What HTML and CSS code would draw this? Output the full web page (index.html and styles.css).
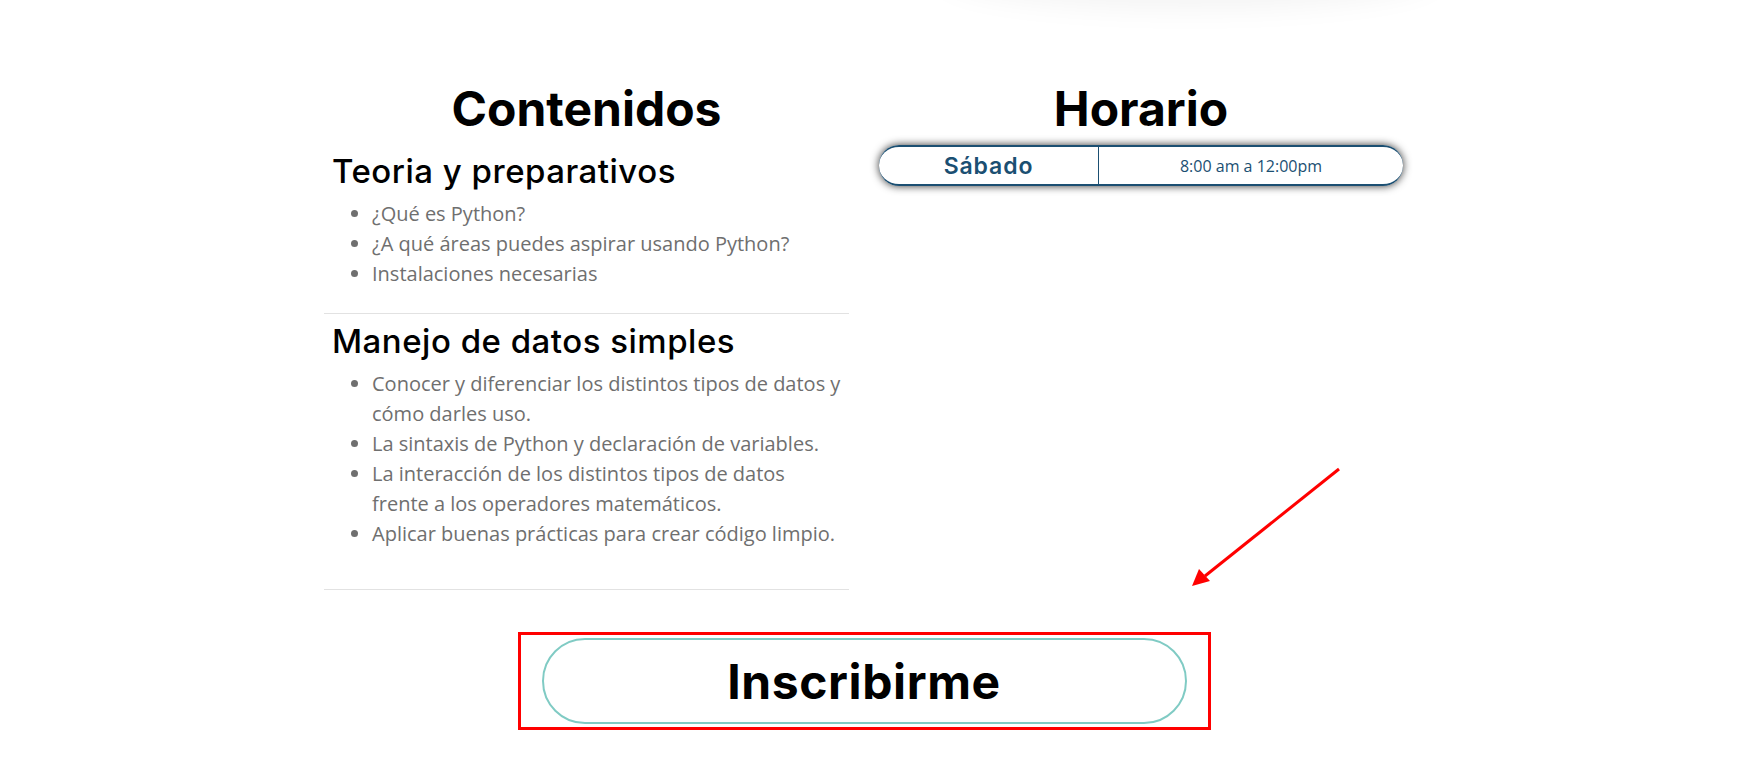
FILE: index.html
```html
<!DOCTYPE html>
<html lang="es">
<head>
<meta charset="utf-8">
<title>Curso de Python</title>
<link rel="stylesheet" href="styles.css">
</head>
<body>
<div class="page">
  <div class="top-shade"></div>
  <main class="wrap">
    <div class="cols">
      <section class="col col-left">
        <h2 class="title">Contenidos</h2>
        <div class="block">
          <h3 class="block-title">Teoria y preparativos</h3>
          <ul class="items">
            <li>¿Qué es Python?</li>
            <li>¿A qué áreas puedes aspirar usando Python?</li>
            <li>Instalaciones necesarias</li>
          </ul>
        </div>
        <div class="block block-last">
          <h3 class="block-title">Manejo de datos simples</h3>
          <ul class="items">
            <li>Conocer y diferenciar los distintos tipos de datos y cómo darles uso.</li>
            <li>La sintaxis de Python y declaración de variables.</li>
            <li>La interacción de los distintos tipos de datos frente a los operadores matemáticos.</li>
            <li>Aplicar buenas prácticas para crear código limpio.</li>
          </ul>
        </div>
      </section>
      <section class="col col-right">
        <h2 class="title">Horario</h2>
        <table class="schedule">
          <tr>
            <td class="day">Sábado</td>
            <td class="time">8:00 am a 12:00pm</td>
          </tr>
        </table>
      </section>
    </div>
    <div class="cta">
      <div class="mark">
        <a class="btn" href="#">Inscribirme</a>
      </div>
    </div>
  </main>
  <svg class="arrow" width="160" height="130" viewBox="0 0 160 130">
    <line x1="148" y1="2" x2="14" y2="109" stroke="#ff0000" stroke-width="3"/>
    <polygon points="1,119 8,102 19,114" fill="#ff0000"/>
  </svg>
</div>
</body>
</html>
```
FILE: styles.css
```css
* { box-sizing: border-box; }
html, body { margin: 0; padding: 0; background: #ffffff; }
body { font-family: "Open Sans", "Liberation Sans", sans-serif; color: #000; }

.page { position: relative; width: 100%; height: 758px; overflow: hidden; }

.top-shade {
  position: absolute;
  left: 940px;
  top: -70px;
  width: 500px;
  height: 70px;
  border-radius: 50%;
  box-shadow: 0 8px 30px rgba(0, 0, 0, 0.05);
}

.wrap {
  width: 1104px;
  margin: 0 auto;
  padding: 0 24px 0 0;
}

.cols {
  display: flex;
  gap: 30px;
  align-items: flex-start;
}

.col-left { width: 525px; }
.col-right { width: 524px; }

.title {
  font-family: Inter, "DejaVu Sans", sans-serif;
  font-weight: 700;
  font-size: 48px;
  line-height: 58px;
  text-align: center;
  margin: 80px 0 9px 0;
}

.block {
  border-bottom: 1px solid #e2e2e2;
  padding: 4px 8px 0 8px;
}

.block-last { padding-top: 7px; }

.block-title {
  font-family: Inter, "DejaVu Sans", sans-serif;
  font-weight: 500;
  font-size: 33px;
  line-height: 40px;
  letter-spacing: 0.5px;
  margin: 0;
}

.items {
  list-style: disc;
  margin: 0;
  padding: 8px 0 24px 40px;
  font-size: 20px;
  line-height: 30px;
  color: #6f6f6f;
}

.items li::marker { color: #6f6f6f; }

.block-last .items { padding-bottom: 40px; }

.schedule {
  width: 524px;
  border-collapse: separate;
  border-spacing: 0;
  border-radius: 20px;
  box-shadow: 0 0 9px rgba(0, 0, 0, 0.8);
  margin-top: -2px;
}

.schedule td {
  height: 41px;
  padding: 0;
  border-top: 2px solid #1b4f72;
  border-bottom: 2px solid #1b4f72;
  text-align: center;
  color: #1b4f72;
}

.day {
  width: 220px;
  font-family: Inter, "DejaVu Sans", sans-serif;
  font-weight: 600;
  font-size: 23px;
  letter-spacing: 0.9px;
  border-right: 1px solid #1b4f72;
  border-radius: 20px 0 0 20px;
}

.time {
  font-size: 16px;
  border-radius: 0 20px 20px 0;
}

.cta {
  display: flex;
  justify-content: center;
  margin-top: 42px;
}

.mark {
  border: 3px solid #ff0000;
  padding: 3px 21px;
}

.btn {
  display: flex;
  align-items: center;
  justify-content: center;
  width: 645px;
  height: 86px;
  border: 2px solid #80cbc4;
  border-radius: 43px;
  font-family: Inter, "DejaVu Sans", sans-serif;
  font-weight: 700;
  font-size: 48px;
  letter-spacing: 0.6px;
  color: #000;
  text-decoration: none;
}

.arrow {
  position: absolute;
  left: 1191px;
  top: 467px;
}
```
